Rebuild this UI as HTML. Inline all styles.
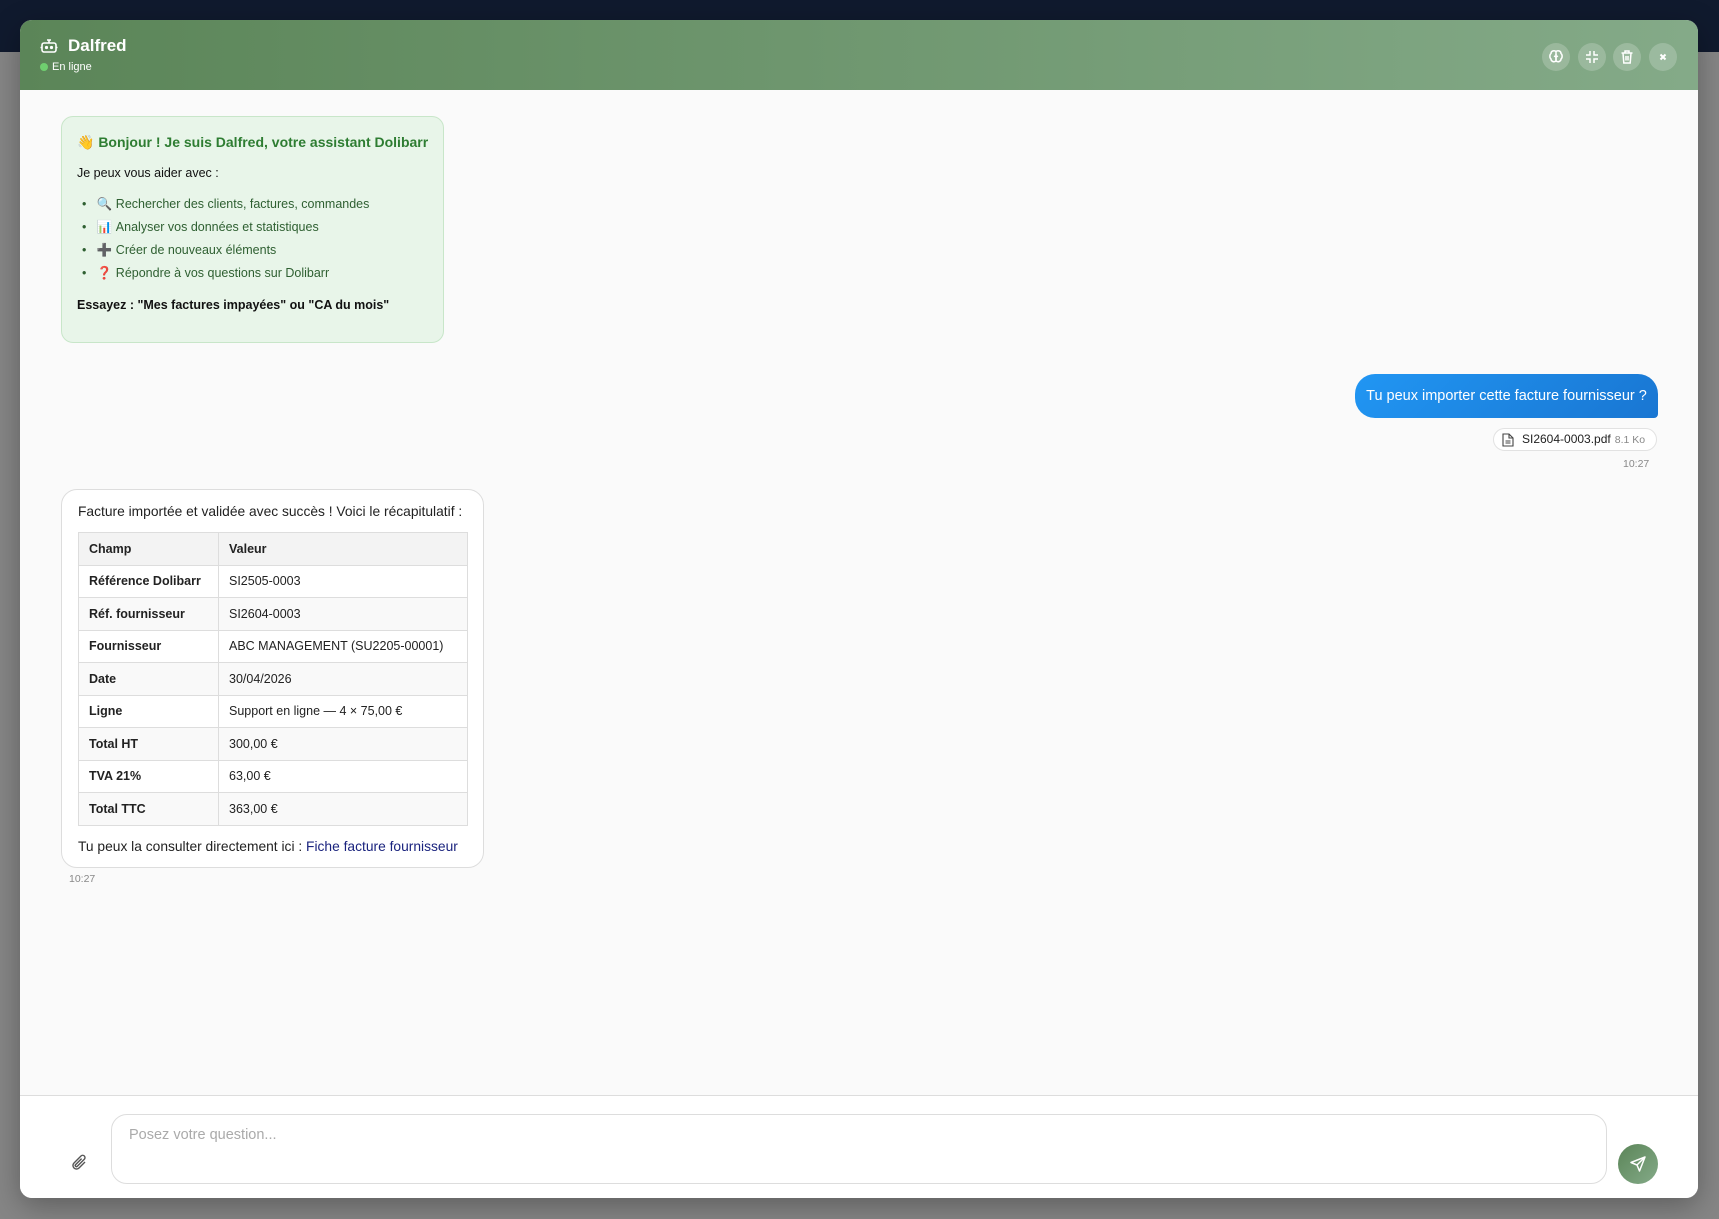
<!DOCTYPE html>
<html><head><meta charset="utf-8"><style>
*{box-sizing:border-box;margin:0;padding:0}
body{width:1719px;height:1219px;overflow:hidden;background:#868686;font-family:"Liberation Sans","Noto Sans CJK JP",sans-serif;position:relative}
.nav{position:absolute;left:0;top:0;width:1719px;height:52px;background:#101a2e}
.modal{position:absolute;left:20px;top:20px;width:1678px;height:1178px;background:#fafafa;border-radius:12px;overflow:hidden;box-shadow:0 8px 30px rgba(0,0,0,.3)}
.hdr{position:absolute;left:0;top:0;width:100%;height:70px;background:linear-gradient(90deg,#5b8558,#84aa88)}
.title{position:absolute;left:48px;top:16px;color:#fff;font-weight:bold;font-size:17px}
.status{position:absolute;left:20px;top:41px;color:#fff;font-size:11px}
.status i{display:inline-block;width:8px;height:8px;border-radius:50%;background:#6fcf6f;margin-right:4px;vertical-align:-0.5px}
.btn{position:absolute;top:23px;width:28px;height:28px;border-radius:50%;background:rgba(255,255,255,.2)}
.btn svg{position:absolute;left:6px;top:6px}
.welcome{position:absolute;left:41px;top:96px;width:383px;height:227px;background:#e8f5e9;border:1px solid #c8e6c9;border-radius:12px;padding:0 15px}
.welcome h3{position:absolute;left:15px;top:17px;font-size:14px;color:#2e7d32;white-space:nowrap}
.welcome .p{position:absolute;left:15px;top:49px;font-size:12.5px;color:#111}
.welcome ul{position:absolute;left:20px;top:80px;list-style:none;font-size:12.5px;color:#2e5f31}
.welcome li{height:23px;white-space:nowrap}
.welcome li b{display:inline-block;width:19px;font-weight:normal;color:#333}
.welcome .e{position:absolute;left:15px;top:181px;font-size:12.5px;font-weight:bold;color:#111;white-space:nowrap}
.user{position:absolute;left:1335px;top:354px;width:303px;height:44px;border-radius:20px 20px 4px 20px;background:linear-gradient(135deg,#2196f3,#1976d2);color:#fff;font-size:14.5px;line-height:44px;text-align:center}
.chip{position:absolute;left:1473px;top:408px;width:164px;height:23px;border:1px solid #e2e2e2;border-radius:12px;background:#fff;font-size:12px;line-height:21px;padding-left:28px;color:#222}
.chip span{color:#888;font-size:10.5px;margin-left:4px}
.chip svg{position:absolute;left:8px;top:4px}
.t{position:absolute;font-size:10.5px;color:#888}
.bot{position:absolute;left:41px;top:469px;width:423px;height:379px;background:#fff;border:1px solid #ddd;border-radius:16px}
.bot .a{position:absolute;left:16px;top:14px;font-size:13.8px;color:#222;white-space:nowrap}
table{position:absolute;left:16px;top:42px;width:390px;border-collapse:collapse;font-size:12.5px;color:#222}
td,th{border:1px solid #ddd;height:32.5px;padding:0 10px;text-align:left}
th{background:#f3f3f3;font-weight:bold}
td:first-child{font-weight:bold;width:140px}
tr:nth-child(odd) td{background:#f9f9f9}
.bot .b{position:absolute;left:16px;top:349px;font-size:13.8px;color:#222;white-space:nowrap}
.bot .b a{color:#1a237e;text-decoration:none}
.foot{position:absolute;left:0;top:1075px;width:100%;height:103px;background:#fff;border-top:1px solid #ddd}
.inp{position:absolute;left:91px;top:18px;width:1496px;height:70px;border:1px solid #ddd;border-radius:16px;font-size:14.5px;color:#aaa;padding:12px 17px}
.send{position:absolute;left:1598px;top:48px;width:40px;height:40px;border-radius:50%;background:linear-gradient(135deg,#5b8558,#84aa88)}
</style></head><body>
<div class="nav"></div>
<div class="modal">
 <div class="hdr">
  <svg style="position:absolute;left:20px;top:18px" width="18" height="16" viewBox="0 0 18 16" fill="none" stroke="#fff" stroke-width="1.6"><rect x="2" y="5" width="14" height="9" rx="2"/><path d="M9 5V2M7 2h4M0.5 9.5h1.5M16 9.5h1.5"/><circle cx="6.5" cy="9.5" r=".8" fill="#fff"/><circle cx="11.5" cy="9.5" r=".8" fill="#fff"/></svg>
  <div class="title">Dalfred</div>
  <div class="status"><i></i>En ligne</div>
  <div class="btn" style="left:1522px"><svg width="16" height="16" viewBox="0 0 16 16" fill="none" stroke="#fff" stroke-width="1.5"><path d="M8 2.5C6 1 3 2 3 4.5 1.5 5.5 1.5 9 3 10c0 2.5 3 3.5 5 2V2.5zM8 2.5c2-1.5 5-.5 5 2 1.5 1 1.5 4.5 0 5.5 0 2.5-3 3.5-5 2"/><path d="M8 5v8M6 7l2 1 2-1"/></svg></div>
  <div class="btn" style="left:1558px"><svg width="16" height="16" viewBox="0 0 16 16" fill="none" stroke="#fff" stroke-width="1.5"><path d="M6 2v4H2M10 2v4h4M6 14v-4H2M10 14v-4h4"/></svg></div>
  <div class="btn" style="left:1593px"><svg width="16" height="16" viewBox="0 0 16 16" fill="none" stroke="#fff" stroke-width="1.5"><path d="M2.5 4h11M6 4V2h4v2M4 4l.8 10h6.4L12 4M7 7v4.5M9 7v4.5"/></svg></div>
  <div class="btn" style="left:1629px"><svg width="16" height="16" viewBox="0 0 16 16" fill="none" stroke="#fff" stroke-width="2"><path d="M5.5 5.5l5 5M10.5 5.5l-5 5"/></svg></div>
 </div>
 <div class="welcome">
  <h3>👋 Bonjour ! Je suis Dalfred, votre assistant Dolibarr</h3>
  <div class="p">Je peux vous aider avec :</div>
  <ul>
   <li>•&nbsp;&nbsp; <b>🔍</b>Rechercher des clients, factures, commandes</li>
   <li>•&nbsp;&nbsp; <b>📊</b>Analyser vos données et statistiques</li>
   <li>•&nbsp;&nbsp; <b>➕</b>Créer de nouveaux éléments</li>
   <li>•&nbsp;&nbsp; <b style="color:#d00">❓</b>Répondre à vos questions sur Dolibarr</li>
  </ul>
  <div class="e">Essayez : "Mes factures impayées" ou "CA du mois"</div>
 </div>
 <div class="user">Tu peux importer cette facture fournisseur ?</div>
 <div class="chip"><svg width="12" height="14" viewBox="0 0 12 14" fill="none" stroke="#444" stroke-width="1.1"><path d="M1 1h6l4 4v8H1zM7 1v4h4M3.5 8h5M3.5 10h5"/></svg>SI2604-0003.pdf<span>8.1 Ko</span></div>
 <div class="t" style="left:1603px;top:438px">10:27</div>
 <div class="bot">
  <div class="a">Facture importée et validée avec succès ! Voici le récapitulatif :</div>
  <table>
   <tr><th style="width:140px">Champ</th><th>Valeur</th></tr>
   <tr><td>Référence Dolibarr</td><td>SI2505-0003</td></tr>
   <tr><td>Réf. fournisseur</td><td>SI2604-0003</td></tr>
   <tr><td>Fournisseur</td><td>ABC MANAGEMENT (SU2205-00001)</td></tr>
   <tr><td>Date</td><td>30/04/2026</td></tr>
   <tr><td>Ligne</td><td>Support en ligne — 4 × 75,00 €</td></tr>
   <tr><td>Total HT</td><td>300,00 €</td></tr>
   <tr><td>TVA 21%</td><td>63,00 €</td></tr>
   <tr><td>Total TTC</td><td>363,00 €</td></tr>
  </table>
  <div class="b">Tu peux la consulter directement ici : <a>Fiche facture fournisseur</a></div>
 </div>
 <div class="t" style="left:49px;top:853px">10:27</div>
 <div class="foot">
  <svg style="position:absolute;left:51px;top:58px" width="18" height="18" viewBox="0 0 18 18" fill="none" stroke="#555" stroke-width="1.4"><path d="M14 8l-6 6a3.5 3.5 0 01-5-5l7-7a2.3 2.3 0 013.3 3.3l-7 7a1.2 1.2 0 01-1.7-1.7l6-6"/></svg>
  <div class="inp">Posez votre question...</div>
  <div class="send"><svg style="position:absolute;left:11px;top:11px" width="18" height="18" viewBox="0 0 18 18" fill="none" stroke="#fff" stroke-width="1.5" stroke-linejoin="round"><path d="M16 2L2 7.5l6 2.5 2.5 6z M16 2L8 10"/></svg></div>
 </div>
</div>
</body></html>
